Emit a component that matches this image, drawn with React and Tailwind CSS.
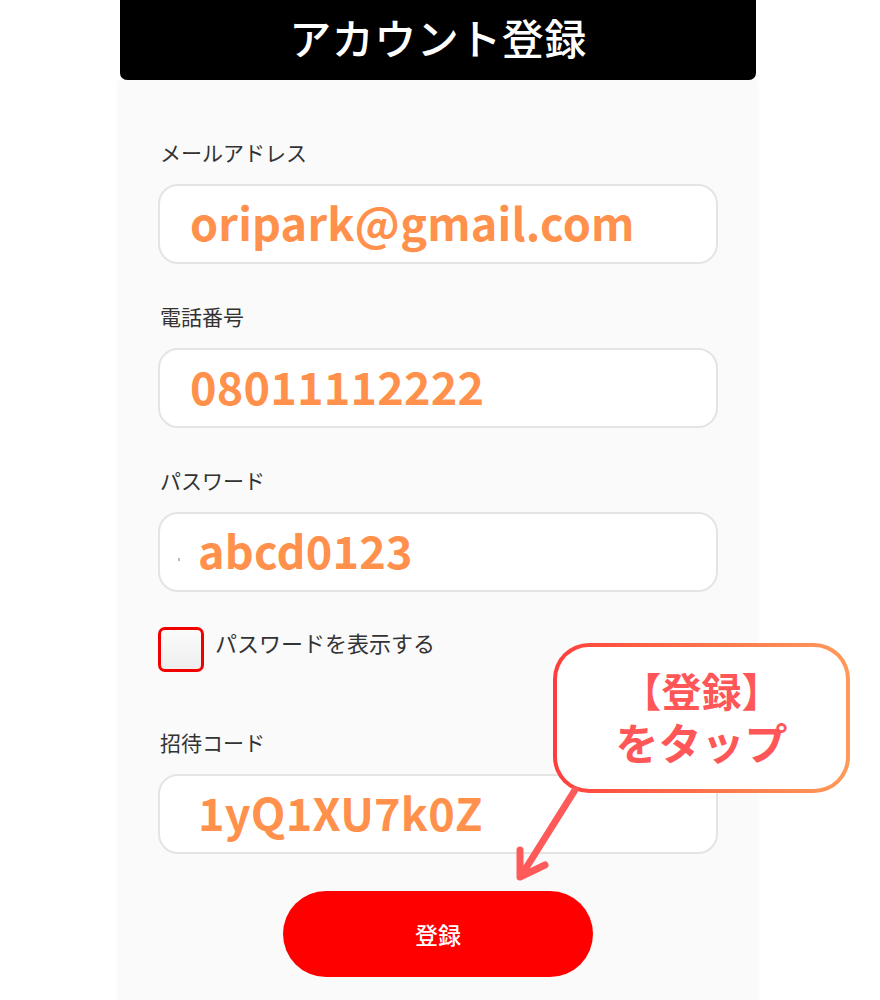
export default function App() {
  const font = { fontFamily: '"Noto Sans CJK JP", "Noto Sans", sans-serif' };

  const Field = ({ label, value, indent = 'pl-[30px]', mark = false }) => (
    <div className="flex flex-col">
      <label className="text-[21px] leading-[30px] text-[#333] pl-[2px]">{label}</label>
      <div className={`mt-[17px] h-[80px] w-[560px] rounded-[20px] border-2 border-[#e4e4e4] bg-white flex items-center ${indent} relative`}>
        {mark && <span className="absolute left-[18px] top-[44px] h-[3px] w-[2px] bg-[#bbb]" />}
        <span className="text-[45px] font-bold text-[#ff914d] leading-none -mt-[5px] tracking-[0.2px]">{value}</span>
      </div>
    </div>
  );

  return (
    <div className="relative min-h-[1000px] bg-white overflow-hidden" style={font}>
      <div className="ml-[120px] w-[636px]">
        <div className="h-[80px] bg-black rounded-b-[7px] flex items-center justify-center">
          <h1 className="text-white text-[42px] font-medium tracking-[0.5px] leading-none -mt-[6px]">アカウント登録</h1>
        </div>
        <div className="bg-[#fafafa] shadow-[0_0_6px_rgba(0,0,0,0.06)] px-[38px] pt-[57px] pb-[60px] flex flex-col">
          <Field label="メールアドレス" value="oripark@gmail.com" />
          <div className="h-[37px]" />
          <Field label="電話番号" value="08011112222" />
          <div className="h-[37px]" />
          <Field label="パスワード" value="abcd0123" indent="pl-[38px]" mark />
          <div className="mt-[35px] flex items-start gap-[11px]">
            <div className="h-[45px] w-[46px] rounded-[7px] border-[3px] border-[#f20000] bg-gradient-to-b from-[#fbfbfb] to-[#eeeeee]" />
            <span className="text-[22px] leading-[30px] text-[#333]">パスワードを表示する</span>
          </div>
          <div className="h-[55px]" />
          <Field label="招待コード" value="1yQ1XU7k0Z" indent="pl-[38px]" />
          <div className="mt-[37px] flex justify-center">
            <button className="h-[86px] w-[310px] rounded-full bg-[#ff0000] text-white text-[23px] font-medium">
              登録
            </button>
          </div>
        </div>
      </div>

      {/* callout */}
      <div className="absolute left-[553px] top-[643px] w-[297px] h-[150px] rounded-[36px] p-[4px] bg-gradient-to-r from-[#ff3c3c] to-[#ff9a5a]">
        <div className="h-full w-full rounded-[32px] bg-white flex flex-col items-center justify-center text-[#ff5757] font-bold">
          <span className="text-[40px] leading-[50px] -mt-[4px]">【登録】</span>
          <span className="text-[43px] leading-[52px]">をタップ</span>
        </div>
      </div>
      <svg className="absolute left-[500px] top-[780px]" width="90" height="110" viewBox="0 0 90 110">
        <path d="M75 10 L21 96 M20 70 L20 97 L45 85" fill="none" stroke="#ff5a5a" strokeWidth="7" strokeLinecap="round" strokeLinejoin="round" />
      </svg>
    </div>
  );
}
